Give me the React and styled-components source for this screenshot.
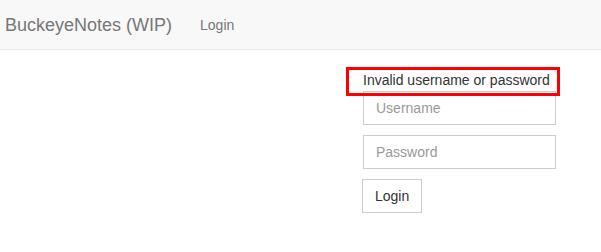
import React from 'react';
import styled, { createGlobalStyle } from 'styled-components';

const GlobalStyle = createGlobalStyle`
  * {
    box-sizing: border-box;
  }

  body {
    margin: 0;
    background: #fff;
    font-family: 'Liberation Sans', Arial, sans-serif;
    font-size: 14px;
    line-height: 20px;
    color: #333;
  }
`;

export default function App() {
  return (
    <>
      <GlobalStyle />
      <Navbar>
        <Brand href="#">BuckeyeNotes (WIP)</Brand>
        <NavLink href="#">Login</NavLink>
      </Navbar>
      <Main>
        <LoginForm onSubmit={(e) => e.preventDefault()}>
          <ErrorBox>Invalid username or password</ErrorBox>
          <Input type="text" placeholder="Username" aria-label="Username" />
          <Input type="password" placeholder="Password" aria-label="Password" />
          <SubmitButton type="submit">Login</SubmitButton>
        </LoginForm>
      </Main>
    </>
  );
}

const Navbar = styled.nav`
  display: flex;
  align-items: center;
  height: 50px;
  background-color: #f8f8f8;
  border-bottom: 1px solid #e7e7e7;
`;

const Brand = styled.a`
  padding: 15px 13px 15px 5px;
  font-size: 18px;
  line-height: 20px;
  color: #777;
  text-decoration: none;
`;

const NavLink = styled.a`
  padding: 15px;
  font-size: 14px;
  line-height: 20px;
  color: #777;
  text-decoration: none;
`;

const Main = styled.main`
  display: flex;
  justify-content: flex-end;
  padding: 17px 45px 0 0;
`;

const LoginForm = styled.form`
  display: flex;
  flex-direction: column;
  align-items: flex-start;
  gap: 10px;
  width: 193px;
`;

const ErrorBox = styled.div`
  position: relative;
  z-index: 1;
  width: 214px;
  height: 29px;
  margin: 0 0 -15px -17px;
  padding: 0 0 0 14px;
  border: 3px solid #f00;
  color: #333;
  white-space: nowrap;
`;

const Input = styled.input`
  display: block;
  width: 100%;
  height: 34px;
  padding: 6px 12px;
  border: 1px solid #ccc;
  border-radius: 0;
  background: #fff;
  font-family: inherit;
  font-size: 14px;
  line-height: 20px;
  color: #555;

  &::placeholder {
    color: #999;
  }
`;

const SubmitButton = styled.button`
  height: 34px;
  margin-left: -1px;
  padding: 6px 12px;
  border: 1px solid #ccc;
  border-radius: 0;
  background: #fff;
  font-family: inherit;
  font-size: 14px;
  line-height: 20px;
  color: #333;
`;
